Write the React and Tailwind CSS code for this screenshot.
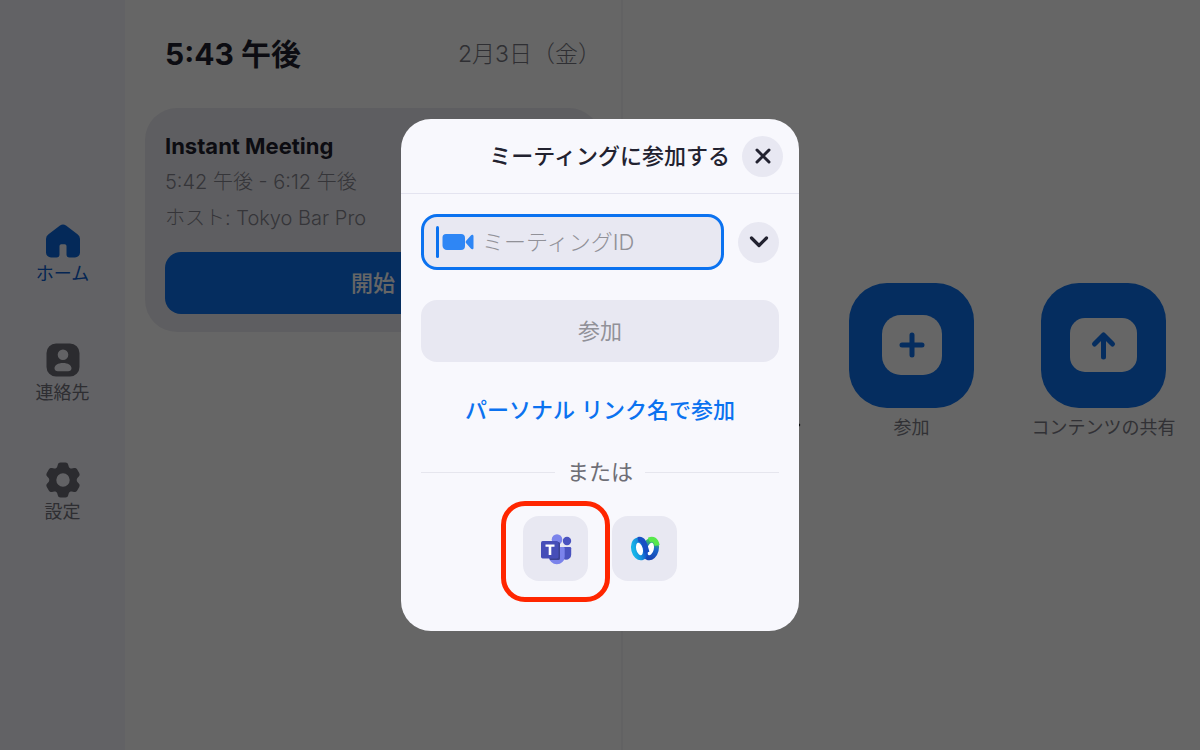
import React from 'react'

const navItems = [
  { label: 'ホーム', icon: HomeIcon, active: true },
  { label: '連絡先', icon: ContactsIcon },
  { label: '設定', icon: SettingsIcon },
]

function HomeIcon() {
  return (
    <svg width="34" height="34" viewBox="0 0 34 34" fill="currentColor" aria-hidden="true">
      <path d="M14 1.5a5 5 0 0 1 6 0l11.5 8.8A5.500 5.500 0 0 1 34 15v13.500a5 5 0 0 1-5 5h-5.500a3 3 0 0 1-3-3V22a1.800 1.800 0 0 0-1.800-1.800h-3.400A1.800 1.800 0 0 0 13.500 22v8.500a3 3 0 0 1-3 3H5a5 5 0 0 1-5-5V15a5.500 5.500 0 0 1 2.500-4.700z" />
    </svg>
  )
}

function ContactsIcon() {
  return (
    <svg width="34" height="34" viewBox="0 0 34 34" fill="currentColor" aria-hidden="true">
      <path
        fillRule="evenodd"
        d="M10 .5h14A9.500 9.500 0 0 1 33.500 10v14a9.500 9.500 0 0 1-9.500 9.500H10A9.500 9.500 0 0 1 .5 24V10A9.500 9.500 0 0 1 10 .5zM17 6.500a5.300 5.300 0 1 0 0 10.600 5.300 5.300 0 0 0 0-10.600zM17 20c-5 0-8.500 2.200-8.500 5.300 0 2 1.400 2.900 3.300 2.900h10.400c1.900 0 3.300-.9 3.300-2.900C25.500 22.200 22 20 17 20z"
      />
    </svg>
  )
}

function SettingsIcon() {
  return (
    <svg width="34" height="36" viewBox="0 0 34 36" fill="currentColor" aria-hidden="true">
      <path
        fillRule="evenodd"
        d="M14.500.5h5c1.500 0 2.300.8 2.700 2.200l.6 2c.4 1.300 1.700 2 3 1.800l2.200-.4c1.400-.3 2.500.2 3.200 1.400l2 3.500c.7 1.200.6 2.400-.4 3.500l-1.400 1.600c-.9 1-.9 2.800 0 3.800l1.400 1.600c1 1.100 1.100 2.300.4 3.500l-2 3.500c-.7 1.200-1.800 1.700-3.200 1.400l-2.200-.4c-1.300-.2-2.600.5-3 1.800l-.6 2c-.4 1.400-1.200 2.200-2.700 2.200h-5c-1.500 0-2.300-.8-2.700-2.200l-.6-2c-.4-1.300-1.700-2-3-1.800l-2.200.4c-1.400.3-2.500-.2-3.200-1.400L.8 25c-.7-1.200-.6-2.400.4-3.500l1.400-1.600c.9-1 .9-2.800 0-3.800l-1.400-1.600C.2 13.400.1 12.200.8 11l2-3.500C3.500 6.300 4.600 5.800 6 6.100l2.200.4c1.300.2 2.600-.5 3-1.800l.6-2C12.200 1.300 13 .5 14.500.5zM17 11.300a6.700 6.700 0 1 0 0 13.400 6.700 6.700 0 0 0 0-13.400z"
      />
    </svg>
  )
}

function VideoIcon() {
  return (
    <svg width="32" height="18" viewBox="0 0 32 18" fill="#2e86f5" aria-hidden="true">
      <path d="M4 1h15a4 4 0 0 1 4 4v8a4 4 0 0 1-4 4H5a4.500 4.500 0 0 1-4.500-4.500V4.500A3.500 3.500 0 0 1 4 1z" />
      <path d="M24 8l4.600-5.300c1.200-1.400 2.900-1.300 2.900.6v11.400c0 1.900-1.700 2-2.900.6L24 10a1.500 1.500 0 0 1 0-2z" />
    </svg>
  )
}

function Chevron({ className = '' }) {
  return (
    <svg width="20" height="12" viewBox="0 0 20 12" fill="none" stroke="currentColor" strokeWidth="3.200" strokeLinecap="round" strokeLinejoin="round" className={className} aria-hidden="true">
      <path d="M2.500 2L10 9.500 17.500 2" />
    </svg>
  )
}

function TeamsIcon() {
  return (
    <svg width="32" height="32" viewBox="0 0 32 32" aria-hidden="true">
      <circle cx="27" cy="8" r="4.200" fill="#4a53bf" />
      <path d="M20 14h10a1.200 1.200 0 0 1 1.200 1.200v6.300a5.300 5.300 0 0 1-5.300 5.300A6 6 0 0 1 20 21z" fill="#4a53bf" />
      <circle cx="17" cy="6.500" r="5.300" fill="#7b83eb" />
      <path d="M10 14h13.500a1.200 1.200 0 0 1 1.200 1.200v8.300a7.800 7.800 0 0 1-15.700 0v-8.300A1.200 1.200 0 0 1 10 14z" fill="#7b83eb" />
      <path d="M9 9h9.500a1.500 1.500 0 0 1 1.500 1.500v15a1.500 1.500 0 0 1-1.500 1.500H10A8 8 0 0 1 9 23z" fill="#3b4294" />
      <rect x="1" y="8" width="17.500" height="17.500" rx="1.700" fill="#464eb8" />
      <path d="M5.500 11.500h9v2.300h-3.200V22H8.700v-8.200H5.500z" fill="#fff" />
    </svg>
  )
}

function WebexIcon() {
  return (
    <svg width="32" height="26" viewBox="0 0 32 26" fill="none" strokeWidth="5" aria-hidden="true">
      <defs>
        <linearGradient id="ring-left" x1="0" y1="0" x2="1" y2="0">
          <stop offset="0" stopColor="#16b4e8" />
          <stop offset="0.450" stopColor="#1590dc" />
          <stop offset="1" stopColor="#1450c8" />
        </linearGradient>
        <linearGradient id="ring-right" x1="0" y1="0" x2="0" y2="1">
          <stop offset="0" stopColor="#3ecb5c" />
          <stop offset="0.450" stopColor="#1b66c9" />
          <stop offset="1" stopColor="#1747b5" />
        </linearGradient>
      </defs>
      <ellipse cx="21.500" cy="13" rx="5.800" ry="9" transform="rotate(14 21.500 13)" fill="#fff" stroke="url(#ring-right)" />
      <ellipse cx="10.500" cy="13" rx="5.800" ry="9" transform="rotate(-14 10.500 13)" fill="#fff" stroke="url(#ring-left)" />
      <path d="M9 3.500c6-1.500 7 6 9 13" stroke="#174fc4" />
      <path d="M20 4c4-2 7 0 8.200 5.500" stroke="#56e84c" />
    </svg>
  )
}

function ActionTile({ label, children, chevron }) {
  return (
    <div className="flex w-[192px] flex-col items-center gap-2">
      <button aria-label={label} className="flex h-[125px] w-[125px] items-center justify-center rounded-[38px] bg-[#0d71ed] text-[#0d71ed]">
        {children}
      </button>
      <span className="flex items-center gap-1 whitespace-nowrap text-lg leading-6 text-[#7c7c86]">
        {label}
        {chevron && <Chevron className="w-4 text-[#131619]" />}
      </span>
    </div>
  )
}

function Sidebar() {
  return (
    <nav className="flex w-[125px] shrink-0 flex-col items-center justify-center gap-[55px] bg-[#f5f5fc]">
      {navItems.map(({ label, icon: Icon, active }) => (
        <a
          key={label}
          href="#"
          className={`flex h-16 flex-col items-center justify-between text-lg leading-7 ${active ? 'text-[#0b5cd0]' : 'text-[#73737d]'}`}
        >
          <span className={active ? 'text-[#0c68de]' : 'text-[#6c6c76]'}>
            <Icon />
          </span>
          {label}
        </a>
      ))}
    </nav>
  )
}

function Schedule() {
  return (
    <section className="w-[498px] shrink-0 border-r-2 border-[#f5f5f8] px-5 pt-8">
      <header className="flex items-center justify-between pl-5">
        <h1 className="text-3xl leading-11 font-bold text-[#1f1f2d]">5:43 午後</h1>
        <time className="text-[23px] font-light text-[#777781]">2月3日（金）</time>
      </header>

      <article className="mt-8 rounded-[32px] bg-[#ececf2] p-5 pb-[18px]">
        <h2 className="text-[22px] leading-9 font-bold text-[#1f1f2d]">Instant Meeting</h2>
        <p className="text-xl leading-9 font-light text-[#85858f]">5:42 午後 - 6:12 午後</p>
        <p className="text-xl leading-9 font-light text-[#85858f]">ホスト: Tokyo Bar Pro</p>
        <button className="mt-4 h-[62px] w-full rounded-[16px] bg-[#0d71ed] text-[22px] font-medium text-white">開始</button>
      </article>
    </section>
  )
}

function JoinDialog() {
  return (
    <div className="fixed inset-0 flex items-center justify-center bg-black/60">
      <div role="dialog" aria-labelledby="join-title" className="w-[398px] rounded-[30px] bg-[#f8f8fd] pb-[50px]">
        <header className="flex h-[75px] items-center justify-end gap-3 border-b border-[#e4e4f0] pr-4">
          <h2 id="join-title" className="text-[22px] font-medium text-[#222230]">ミーティングに参加する</h2>
          <button aria-label="閉じる" className="flex h-[41px] w-[41px] items-center justify-center rounded-full bg-[#e8e8f2] text-[#222230]">
            <svg width="18" height="18" viewBox="0 0 18 18" stroke="currentColor" strokeWidth="3" strokeLinecap="round" aria-hidden="true">
              <path d="M3 3l12 12M15 3L3 15" />
            </svg>
          </button>
        </header>

        <div className="px-5 pt-5">
          <div className="flex items-center gap-[14px]">
            <label className="flex h-14 min-w-0 flex-1 items-center rounded-[16px] border-[3px] border-[#0b72f0] bg-[#e8e8f2] pl-3">
              <span className="mr-[3px] h-8 w-[3px] shrink-0 rounded-full bg-[#0b72f0]" />
              <span className="shrink-0"><VideoIcon /></span>
              <input
                type="text"
                aria-label="ミーティングID"
                placeholder="ミーティングID"
                className="ml-2 w-full min-w-0 bg-transparent text-[22px] font-light outline-none placeholder:text-[#919198]"
              />
            </label>
            <button aria-label="履歴" className="flex h-[41px] w-[41px] shrink-0 items-center justify-center rounded-full bg-[#e8e8f2] text-[#222230]">
              <Chevron />
            </button>
          </div>

          <button className="mt-[30px] h-[62px] w-full rounded-[16px] bg-[#e8e8f2] text-[22px] text-[#919198]">参加</button>

          <a href="#" className="mt-7 block text-center text-[22px] leading-10 font-medium text-[#0b72f0]">パーソナル リンク名で参加</a>

          <div className="mt-5 flex items-center gap-3 text-[22px] leading-11 text-[#6e6e76]">
            <span className="h-px flex-1 bg-[#e6e6ee]" />
            または
            <span className="h-px flex-1 bg-[#e6e6ee]" />
          </div>

          <div className="mt-[22px] flex justify-center gap-6">
            <button aria-label="Microsoft Teams" className="relative flex h-[65px] w-[65px] items-center justify-center rounded-[16px] bg-[#e8e8f2]">
              <TeamsIcon />
              <span className="absolute -inset-x-[22px] -top-[15px] -bottom-[21px] rounded-[24px] border-[5px] border-[#ff2600]" />
            </button>
            <button aria-label="Webex" className="flex h-[65px] w-[65px] items-center justify-center rounded-[16px] bg-[#e8e8f2]">
              <WebexIcon />
            </button>
          </div>
        </div>
      </div>
    </div>
  )
}

export default function App() {
  return (
    <div lang="ja" className="flex min-h-screen bg-white font-['Inter','Noto_Sans_CJK_JP',sans-serif]">
      <Sidebar />
      <Schedule />

      <main className="flex flex-1 items-center justify-center pb-7">
        <ActionTile label="新規ミーティング" chevron>
          <svg width="66" height="42" viewBox="0 0 32 18" fill="#fff" aria-hidden="true">
            <path d="M4 1h15a4 4 0 0 1 4 4v12H5a4 4 0 0 1-4-4V4a3 3 0 0 1 3-3zM25 7l6-5v14l-6-5z" />
          </svg>
        </ActionTile>
        <ActionTile label="参加">
          <svg width="60" height="60" viewBox="0 0 60 60" fill="none" stroke="currentColor" strokeWidth="5" strokeLinecap="round" aria-hidden="true">
            <rect width="60" height="60" rx="19" fill="#fff" stroke="none" />
            <path d="M30 20v20M20 30h20" />
          </svg>
        </ActionTile>
        <ActionTile label="コンテンツの共有">
          <svg width="67" height="54" viewBox="0 0 67 54" fill="none" stroke="currentColor" strokeWidth="5" strokeLinecap="round" strokeLinejoin="round" aria-hidden="true">
            <rect width="67" height="54" rx="15" fill="#fff" stroke="none" />
            <path d="M33.500 39V17M24.500 26l9-9 9 9" />
          </svg>
        </ActionTile>
      </main>

      <JoinDialog />
    </div>
  )
}
